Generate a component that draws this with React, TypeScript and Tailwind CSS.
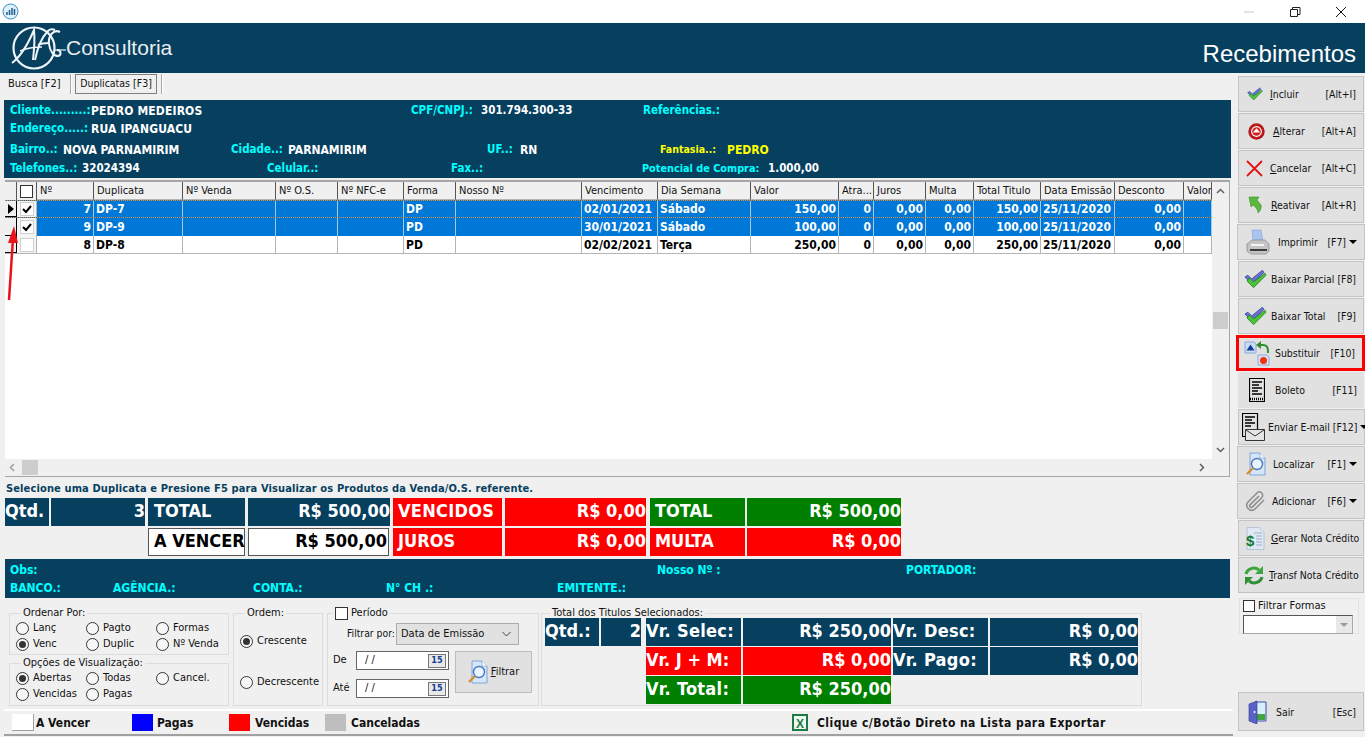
import React from "react";

// Grid column template shared by header and rows
const GRID_COLS =
  "grid grid-cols-[12px_20px_57px_89px_93px_62px_66px_52px_126px_76px_93px_88px_35px_52px_48px_67px_74px_69px_28px]";

const HEADERS = [
  "Nº", "Duplicata", "Nº Venda", "Nº O.S.", "Nº NFC-e", "Forma", "Nosso Nº", "Vencimento", "Dia Semana",
  "Valor", "Atra...", "Juros", "Multa", "Total Titulo", "Data Emissão", "Desconto", "Valor",
];

const ROWS = [
  { checked: true, current: true, n: "7", dup: "DP-7", forma: "DP", venc: "02/01/2021", dia: "Sábado", valor: "150,00", total: "150,00" },
  { checked: true, current: false, n: "9", dup: "DP-9", forma: "PD", venc: "30/01/2021", dia: "Sábado", valor: "100,00", total: "100,00" },
  { checked: false, current: false, n: "8", dup: "DP-8", forma: "PD", venc: "02/02/2021", dia: "Terça", valor: "250,00", total: "250,00" },
];

const CY = "whitespace-nowrap text-[11.5px] text-[#00ffff]";
const VAL = "whitespace-nowrap tracking-[.15px]";

const Logo = () => (
  <svg width="55" height="50" viewBox="0 0 55 50" className="shrink-0" fill="none" stroke="#eef3f6">
    <circle cx="23" cy="25" r="20.500" strokeWidth="2.200" />
    <path d="M1 40C9 34 17 21 23 7c1 9 0 21-1 30" strokeWidth="2" />
    <path d="M9 28c7-3 15-4 22-4" strokeWidth="1.600" />
    <path d="M24 37c2-10 5-21 13-29 2-2 5-2 7-1M27 22c4-2 8-2 11-2" strokeWidth="2" />
    <path d="M49 9c-6-3-12 3-11 12 1 8 5 12 9 12 4-1 3-6-1-6" strokeWidth="2" />
    <path d="M44 27h11" strokeWidth="1.200" />
  </svg>
);

const CheckIcon = ({ big }: { big?: boolean }) => (
  <svg width={big ? 23 : 16} height={big ? 20 : 14} viewBox="0 0 24 20">
    <path d="M1 8l3-2 4 4L19 1l2 2L8 15z" fill="#6a72d6" stroke="#2a3590" strokeWidth=".8" />
    <path d="M3 12l3-3 4 4L22 4l1 2-13 13z" fill="#4cc23a" stroke="#1f7f1f" strokeWidth=".8" />
  </svg>
);

const AlterIcon = () => (
  <svg width="17" height="17" viewBox="0 0 17 17">
    <circle cx="8.500" cy="8.500" r="8.200" fill="#b8181a" />
    <circle cx="8.500" cy="8.500" r="5.400" fill="#fff" />
    <circle cx="8.500" cy="8.500" r="4.300" fill="#d3201f" />
    <path d="M8.500 5.200l3.600 4.300H4.900z" fill="#fff" />
  </svg>
);

const CancelIcon = () => (
  <svg width="17" height="17" viewBox="0 0 17 17" fill="none" stroke="#e01515" strokeWidth="1.800">
    <path d="M1 1l15 15M16 1L1 16" />
  </svg>
);

const ReativarIcon = () => (
  <svg width="14" height="18" viewBox="0 0 14 18">
    <path d="M1 1h10l-2 3 4 5c1 3-1 6-3 8 0-3-2-6-5-8L3 11z" fill="#5cb83c" stroke="#3c8f2a" strokeWidth=".6" />
  </svg>
);

const PrinterIcon = () => (
  <svg width="24" height="26" viewBox="0 0 24 26">
    <path d="M6 1h9l2 11H7z" fill="#a9c4ee" stroke="#7f9bd0" strokeWidth=".5" />
    <path d="M1 15l5-4h13l4 4v7l-3 3H5l-4-3z" fill="#c4c4c4" stroke="#858585" strokeWidth=".7" />
    <path d="M4 20h17v2H4z" fill="#3c3c3c" />
    <path d="M5 15h13v2H5z" fill="#f4f4f4" />
  </svg>
);

const SubstituirIcon = () => (
  <svg width="26" height="25" viewBox="0 0 26 25">
    <path d="M1 1h9l2 2v9H1z" fill="#c9dcf7" stroke="#7f9dd0" strokeWidth=".8" />
    <path d="M6.500 3.500l4 6h-8z" fill="#123a97" />
    <path d="M14 14h9l2 2v8H14z" fill="#d6e4f8" stroke="#7f9dd0" strokeWidth=".8" />
    <circle cx="19.500" cy="19.500" r="3.500" fill="#f0330f" />
    <path d="M16 4h3c3 0 5 2 5 6v2" fill="none" stroke="#2f8f2f" strokeWidth="2" />
    <path d="M17 0v8l-5-4z" fill="#2f8f2f" />
  </svg>
);

const BoletoIcon = () => (
  <svg width="16" height="24" viewBox="0 0 16 24" fill="none" stroke="#000">
    <path d="M.5.500h15v23H.5z" strokeWidth="1.200" />
    <path d="M3 4h10M3 7h7M3 10h10M3 13h6M3 16h10" strokeWidth="1.600" />
    <path d="M1 21h14" strokeWidth="2.400" strokeDasharray="1 1" />
  </svg>
);

const EmailIcon = () => (
  <svg width="23" height="28" viewBox="0 0 23 28" fill="none" stroke="#000">
    <path d="M.5.500h15v23H.5z" strokeWidth="1.200" />
    <path d="M3 4h10M3 7h7M3 10h10M3 13h6" strokeWidth="1.500" />
    <path d="M3.500 16.500h19v11h-19z" fill="#e4e4e4" stroke="#333" />
    <path d="M4 17l9 6 9-6" stroke="#333" />
  </svg>
);

const FindIcon = () => (
  <svg width="20" height="24" viewBox="0 0 20 24">
    <path d="M4 1h10l5 5v17H4z" fill="#d5e5fa" stroke="#6d94d2" strokeWidth=".8" />
    <path d="M14 1v5h5" fill="#fff" stroke="#6d94d2" strokeWidth=".6" />
    <circle cx="11" cy="12" r="5.500" fill="#eaf6ff" stroke="#4a79b8" strokeWidth="1.400" />
    <path d="M7 16l-6 6" stroke="#d98d2b" strokeWidth="2.400" />
  </svg>
);

const ClipIcon = () => (
  <svg width="24" height="24" viewBox="0 0 24 24" fill="none" stroke="#8d8d8d" strokeWidth="1.500">
    <path d="M21 11l-9.200 9.200a5 5 0 0 1-7-7L14 4a3.300 3.300 0 0 1 4.700 4.700l-9.200 9.200a1.600 1.600 0 0 1-2.300-2.300L16 7" />
  </svg>
);

const NotaIcon = () => (
  <svg width="20" height="23" viewBox="0 0 20 23">
    <path d="M2 .500h12l5 5v17H2z" fill="#dfe8f3" stroke="#a5b6cc" strokeWidth=".7" />
    <path d="M9 6h8M11 9h6M11 12h6M11 15h6M11 18h6" stroke="#9fb0c4" />
    <text x="1" y="19" fontSize="15" fontWeight="700" fontFamily="Liberation Sans" fill="#0f7a35">$</text>
  </svg>
);

const TransfIcon = () => (
  <svg width="20" height="21" viewBox="0 0 20 21" fill="none">
    <path d="M2 9c1-5 8-8 13-4" stroke="#3ea53c" strokeWidth="3" />
    <path d="M19 1v8h-8z" fill="#3ea53c" />
    <path d="M18 12c-1 5-8 8-13 4" stroke="#2f8f36" strokeWidth="3" />
    <path d="M1 20v-8h8z" fill="#2f8f36" />
  </svg>
);

const DoorIcon = () => (
  <svg width="19" height="24" viewBox="0 0 19 24">
    <path d="M7 2h11v19H7z" fill="#d4f0fa" stroke="#3a4aa8" />
    <path d="M8 14h9v6H8z" fill="#3fa53c" />
    <path d="M1 4l8-3v23l-8-3z" fill="#5a62c8" stroke="#2f3790" strokeWidth=".6" />
    <circle cx="6.500" cy="12" r="1" fill="#fff" />
  </svg>
);

const Caret = () => <span className="ml-[3px] h-0 w-0 shrink-0 border-x-[4px] border-t-[4px] border-x-transparent border-t-black" />;

type SideButtonProps = {
  icon: React.ReactNode;
  iconBox: string;
  label: React.ReactNode;
  hot?: string;
  caret?: boolean;
  className?: string;
};

const SideButton = ({ icon, iconBox, label, hot, caret, className = "" }: SideButtonProps) => (
  <button className={`flex h-[36px] w-[126px] shrink-0 items-center border border-[#c4c4c4] bg-[#e1e1e1] pr-[7px] text-[10.4px] text-[#111] ${className}`}>
    <span className={`flex shrink-0 items-center justify-center ${iconBox}`}>{icon}</span>
    <span className="mt-[2px] whitespace-nowrap">{label}</span>
    {hot && <span className="ml-auto mt-[2px] whitespace-nowrap">{hot}</span>}
    {caret && <Caret />}
  </button>
);

const Radio = ({ label, checked, className = "" }: { label: string; checked?: boolean; className?: string }) => (
  <label className={`flex h-[16px] items-center gap-[4px] whitespace-nowrap text-[11px] text-[#111] ${className}`}>
    <span className="flex h-[13px] w-[13px] shrink-0 items-center justify-center rounded-full border border-[#333] bg-[#f7f7f7]">
      {checked && <span className="h-[7px] w-[7px] rounded-full bg-[#333]" />}
    </span>
    {label}
  </label>
);

const Group = ({ title, className = "", children }: { title: React.ReactNode; className?: string; children: React.ReactNode }) => (
  <fieldset className={`border border-[#dcdcdc] ${className}`}>
    <legend className="-mt-px ml-[5px] px-[2px] text-[11px] leading-[14px] text-[#111]">{title}</legend>
    {children}
  </fieldset>
);

const BigCell = ({ children, className = "" }: { children: React.ReactNode; className?: string }) => (
  <div className={`flex h-[28px] shrink-0 items-center whitespace-nowrap pb-[3px] text-[18px] font-bold leading-none ${className}`}>{children}</div>
);

const DateInput = () => (
  <div className="flex h-[19px] w-[93px] items-center border border-[#666] bg-white pl-[8px] text-[11px]">
    <span>/ /</span>
    <span className="ml-auto mr-[2px] flex h-[14px] w-[18px] items-center justify-center border border-[#777] bg-[#e8e8e8] text-[9px] font-bold leading-none text-[#123a97]">15</span>
  </div>
);

export default function App() {
  return (
    <div className="flex h-[737px] w-[1365px] flex-col overflow-hidden bg-[#f0f0f0] font-['DejaVu_Sans'] font-stretch-condensed text-[11px] text-[#111]">
      {/* Title bar */}
      <div className="flex h-[23px] shrink-0 items-center bg-white pl-[2px]">
        <svg width="17" height="17" viewBox="0 0 17 17" fill="none">
          <circle cx="8.500" cy="8.500" r="7.500" fill="#dff1fb" stroke="#2f8fc0" />
          <path d="M5 12V9M7.500 12V7M10 12V5M12.500 12V6" stroke="#1c5f8f" strokeWidth="1.500" />
        </svg>
        <div className="ml-auto flex items-center">
          <svg width="12" height="10" viewBox="0 0 12 10" className="mr-[34px]"><path d="M1 5h10" stroke="#c8c8c8" /></svg>
          <svg width="12" height="10" viewBox="0 0 12 10" fill="none" stroke="#222" className="mr-[34px]">
            <path d="M1.500 2.500h7v7h-7zM3.500 2.500V.5h7.500v7H8.500" />
          </svg>
          <svg width="12" height="12" viewBox="0 0 12 12" fill="none" stroke="#111" className="mr-[18px]">
            <path d="M1 1l10 10M11 1L1 11" />
          </svg>
        </div>
      </div>

      {/* Header */}
      <header className="flex h-[50px] shrink-0 items-center bg-[#07405f] pl-[11px] pr-[9px] text-white">
        <Logo />
        <span className="font-['Liberation_Sans'] text-[21px] text-[#e8eef2] font-stretch-normal">Consultoria</span>
        <span className="ml-auto mt-[12px] font-['Liberation_Sans'] text-[24px] font-stretch-normal">Recebimentos</span>
      </header>

      <div className="flex min-h-0 flex-1">
        {/* Left column */}
        <main className="flex w-[1238px] shrink-0 flex-col">
          {/* Tabs */}
          <div className="flex h-[22px] shrink-0 items-center">
            <span className="ml-[8px] w-[62px]">Busca [F2]</span>
            <span className="h-[20px] w-[2px] border-x border-l-[#a8a8a8] border-r-white" />
            <span className="ml-[3px] flex h-[20px] w-[82px] items-center justify-center border border-[#808080] text-[10.5px]">Duplicatas [F3]</span>
            <span className="ml-[4px] h-[20px] w-[2px] border-x border-l-[#a8a8a8] border-r-white" />
          </div>

          {/* Client panel */}
          <section className="ml-[4px] mt-[5px] flex h-[78px] w-[1227px] shrink-0 flex-col bg-[#07405f] pl-[6px] font-bold text-[12px] text-white">
            <div className="mt-[2px] flex h-[18px] items-center">
              <span className={`w-[81px] ${CY}`}>Cliente.........:</span>
              <span className={`w-[320px] ${VAL}`}>PEDRO MEDEIROS</span>
              <span className={`w-[70px] ${CY}`}>CPF/CNPJ.:</span>
              <span className="w-[162px] whitespace-nowrap text-[11.5px]">301.794.300-33</span>
              <span className={CY}>Referências.:</span>
            </div>
            <div className="flex h-[18px] items-center">
              <span className={`w-[81px] ${CY}`}>Endereço.....:</span>
              <span className={VAL}>RUA IPANGUACU</span>
            </div>
            <div className="mt-[2px] flex h-[20px] items-center">
              <span className={`w-[53px] ${CY}`}>Bairro..:</span>
              <span className="w-[168px] whitespace-nowrap">NOVA PARNAMIRIM</span>
              <span className={`w-[57px] ${CY}`}>Cidade..:</span>
              <span className="w-[199px] whitespace-nowrap">PARNAMIRIM</span>
              <span className={`w-[33px] ${CY}`}>UF..:</span>
              <span className="w-[140px]">RN</span>
              <span className="w-[67px] whitespace-nowrap text-[10.5px] text-[#ffff00]">Fantasia..:</span>
              <span className="text-[#ffff00]">PEDRO</span>
            </div>
            <div className="flex h-[18px] items-center">
              <span className={`w-[72px] ${CY}`}>Telefones..:</span>
              <span className="w-[185px] text-[11.5px]">32024394</span>
              <span className={`w-[184px] ${CY}`}>Celular..:</span>
              <span className={`w-[191px] ${CY}`}>Fax..:</span>
              <span className="w-[126px] whitespace-nowrap text-[10.8px] text-[#00ffff]">Potencial de Compra:</span>
              <span className="text-[11.5px]">1.000,00</span>
            </div>
          </section>

          {/* Grid */}
          <section className="relative ml-[5px] mt-[2px] flex h-[297px] w-[1225px] shrink-0 flex-col border-t-2 border-r border-b border-[#a6a6a6] bg-[#f0f0f0]">
            <div className="flex min-h-0 flex-1">
              <div className="flex w-[1207px] flex-col overflow-hidden bg-white">
                <div className={`${GRID_COLS} h-[18px] shrink-0 bg-[#f0f0f0]`}>
                  <span className="border-r border-[#555]" />
                  <span className="flex items-center justify-center border-r border-[#555]">
                    <span className="h-[13px] w-[13px] border border-[#333] bg-white" />
                  </span>
                  {HEADERS.map((h, i) => (
                    <span key={i} className="overflow-hidden whitespace-nowrap border-b border-r border-b-[#b5b5b5] border-r-[#555] pl-[3px] leading-[17px]">{h}</span>
                  ))}
                </div>
                {ROWS.map((r) => {
                  const sel = r.checked;
                  const cell = `flex items-center overflow-hidden whitespace-nowrap border-r px-[2px] ${sel ? "border-[#a8c8e8]" : "border-[#b5b5b5]"}`;
                  const right = `${cell} justify-end`;
                  return (
                    <div
                      key={r.n}
                      className={`${GRID_COLS} h-[18px] shrink-0 text-[12px] font-bold ${sel ? "bg-[#0078d7] text-white" : "border-b border-[#b5b5b5] bg-white text-black"} ${r.current ? "border-y border-dotted border-[#f08a24]" : ""}`}
                    >
                      <span className="flex items-center justify-center border-b border-r border-black bg-[#f0f0f0]">
                        {r.current && <span className="h-0 w-0 border-y-[5px] border-l-[6px] border-y-transparent border-l-black" />}
                      </span>
                      <span className="flex items-center justify-center border-r border-[#b5b5b5] bg-[#f4f4f4]">
                        <span className="flex h-[14px] w-[14px] items-center justify-center border border-[#d0d0d0] bg-white">
                          {r.checked && (
                            <svg width="10" height="9" viewBox="0 0 10 9" fill="none" stroke="#000" strokeWidth="2"><path d="M1 4l3 3 5-6" /></svg>
                          )}
                        </span>
                      </span>
                      <span className={right}>{r.n}</span>
                      <span className={cell}>{r.dup}</span>
                      <span className={cell} />
                      <span className={cell} />
                      <span className={cell} />
                      <span className={cell}>{r.forma}</span>
                      <span className={cell} />
                      <span className={cell}>{r.venc}</span>
                      <span className={cell}>{r.dia}</span>
                      <span className={right}>{r.valor}</span>
                      <span className={right}>0</span>
                      <span className={right}>0,00</span>
                      <span className={right}>0,00</span>
                      <span className={right}>{r.total}</span>
                      <span className={cell}>25/11/2020</span>
                      <span className={right}>0,00</span>
                      <span className={cell} />
                    </div>
                  );
                })}
              </div>
              {/* Vertical scrollbar */}
              <div className="flex w-[17px] flex-col items-center py-[6px]">
                <svg width="9" height="6" viewBox="0 0 9 6" fill="none" stroke="#606060" strokeWidth="1.500"><path d="M1 5l3.500-3.500L8 5" /></svg>
                <span className="mt-[118px] h-[17px] w-[15px] bg-[#cdcdcd]" />
                <svg width="9" height="6" viewBox="0 0 9 6" fill="none" stroke="#606060" strokeWidth="1.500" className="mt-auto"><path d="M1 1l3.500 3.500L8 1" /></svg>
              </div>
            </div>
            {/* Horizontal scrollbar */}
            <div className="flex h-[17px] shrink-0 items-center pl-[4px] pr-[24px]">
              <svg width="6" height="9" viewBox="0 0 6 9" fill="none" stroke="#a0a0a0" strokeWidth="1.500"><path d="M5 1L1.500 4.500 5 8" /></svg>
              <span className="ml-[7px] h-[15px] w-[16px] bg-[#cdcdcd]" />
              <svg width="6" height="9" viewBox="0 0 6 9" fill="none" stroke="#606060" strokeWidth="1.500" className="ml-auto"><path d="M1 1l3.500 3.500L1 8" /></svg>
            </div>
            {/* Red annotation arrow */}
            <svg width="12" height="76" viewBox="0 0 12 76" className="absolute left-[1px] top-[44px]">
              <path d="M3 74L7 12" stroke="#e8141c" strokeWidth="2.500" />
              <path d="M8 0l4 17H2z" fill="#e8141c" />
            </svg>
          </section>

          <p className="ml-[6px] mt-[5px] h-[14px] shrink-0 whitespace-nowrap text-[11px] font-bold leading-[14px] tracking-[.13px] text-[#07405f]">
            Selecione uma Duplicata e Presione F5 para Visualizar os Produtos da Venda/O.S. referente.
          </p>

          {/* Totals */}
          <div className="ml-[5px] mt-[2px] flex h-[58px] shrink-0 flex-col gap-[2px] text-white">
            <div className="flex">
              <BigCell className="w-[44px] bg-[#07405f]">Qtd.</BigCell>
              <BigCell className="ml-[2px] w-[94px] justify-end bg-[#07405f]">3</BigCell>
              <BigCell className="ml-[3px] w-[97px] bg-[#07405f] pl-[6px]">TOTAL</BigCell>
              <BigCell className="ml-[3px] w-[142px] justify-end bg-[#07405f]">R$ 500,00</BigCell>
              <BigCell className="ml-[3px] w-[109px] bg-[#ff0000] pl-[5px] tracking-[.3px]">VENCIDOS</BigCell>
              <BigCell className="ml-[3px] w-[141px] justify-end bg-[#ff0000]">R$ 0,00</BigCell>
              <BigCell className="ml-[4px] w-[95px] bg-[#008000] pl-[5px]">TOTAL</BigCell>
              <BigCell className="ml-[2px] w-[154px] justify-end bg-[#008000]">R$ 500,00</BigCell>
            </div>
            <div className="flex">
              <BigCell className="ml-[143px] w-[97px] border border-[#555] bg-white pl-[5px] text-black">A VENCER</BigCell>
              <BigCell className="ml-[3px] w-[141px] justify-end border border-[#555] bg-white pr-[1px] text-black">R$ 500,00</BigCell>
              <BigCell className="ml-[4px] w-[109px] bg-[#ff0000] pl-[5px]">JUROS</BigCell>
              <BigCell className="ml-[3px] w-[141px] justify-end bg-[#ff0000]">R$ 0,00</BigCell>
              <BigCell className="ml-[4px] w-[95px] bg-[#ff0000] pl-[5px]">MULTA</BigCell>
              <BigCell className="ml-[2px] w-[154px] justify-end bg-[#ff0000]">R$ 0,00</BigCell>
            </div>
          </div>

          {/* Info panel */}
          <section className="ml-[5px] mt-[3px] flex h-[39px] w-[1225px] shrink-0 flex-col justify-center bg-[#07405f] pl-[5px] text-[12px] font-bold text-[#00ffff]">
            <div className="flex h-[18px] items-center">
              <span className="w-[647px]">Obs:</span>
              <span className="w-[249px]">Nosso Nº :</span>
              <span>PORTADOR:</span>
            </div>
            <div className="flex h-[18px] items-center">
              <span className="w-[103px]">BANCO.:</span>
              <span className="w-[140px]">AGÊNCIA.:</span>
              <span className="w-[133px]">CONTA.:</span>
              <span className="w-[171px]">N° CH .:</span>
              <span>EMITENTE.:</span>
            </div>
          </section>

          {/* Filters */}
          <div className="ml-[9px] mt-[8px] flex h-[100px] shrink-0">
            <div className="flex w-[220px] shrink-0 flex-col">
              <Group title="Ordenar Por:" className="h-[49px] pl-[6px]">
                <div className="grid grid-cols-[70px_70px_1fr]">
                  <Radio label="Lanç" />
                  <Radio label="Pagto" />
                  <Radio label="Formas" />
                  <Radio label="Venc" checked />
                  <Radio label="Duplic" />
                  <Radio label="Nº Venda" />
                </div>
              </Group>
              <Group title="Opções de Visualização:" className="mt-[1px] h-[50px] pl-[6px]">
                <div className="grid grid-cols-[70px_70px_1fr]">
                  <Radio label="Abertas" checked />
                  <Radio label="Todas" />
                  <Radio label="Cancel." />
                  <Radio label="Vencidas" />
                  <Radio label="Pagas" />
                </div>
              </Group>
            </div>

            <Group title="Ordem:" className="ml-[4px] flex h-[100px] w-[90px] shrink-0 flex-col pl-[6px]">
              <Radio label="Crescente" className="mt-[13px]" checked />
              <Radio label="Decrescente" className="mt-[25px]" />
            </Group>

            <Group
              title={
                <span className="flex items-center gap-[3px]">
                  <span className="h-[13px] w-[13px] border border-[#333] bg-white" />
                  Período
                </span>
              }
              className="ml-[4px] h-[100px] w-[212px] shrink-0"
            >
              <div className="ml-[19px] mt-[3px] flex h-[22px] items-center">
                <span className="w-[49px] whitespace-nowrap text-[10.3px]">Filtrar por:</span>
                <span className="flex h-[22px] w-[123px] items-center justify-between border border-[#adadad] bg-[#e1e1e1] pl-[4px] pr-[7px]">
                  Data de Emissão
                  <svg width="9" height="6" viewBox="0 0 9 6" fill="none" stroke="#444"><path d="M.5 1l4 4 4-4" /></svg>
                </span>
              </div>
              <div className="mt-[6px] flex">
                <div className="ml-[5px] flex w-[23px] flex-col text-[11px]">
                  <span className="flex h-[19px] items-center">De</span>
                  <span className="mt-[9px] flex h-[19px] items-center">Até</span>
                </div>
                <div className="flex flex-col gap-[9px]">
                  <DateInput />
                  <DateInput />
                </div>
                <button className="ml-[6px] flex h-[42px] w-[77px] items-center justify-center gap-[3px] border border-[#bdbdbd] bg-[#e1e1e1]">
                  <FindIcon />
                  <span><span className="underline">F</span>iltrar</span>
                </button>
              </div>
            </Group>

            <Group title="Total dos Titulos Selecionados:" className="ml-[2px] flex h-[100px] w-[601px] shrink-0 pl-[3px] text-white">
              <div className="-mt-[2px] flex">
                <div className="mr-[5px] flex gap-[2px]">
                  <BigCell className="w-[54px] bg-[#07405f]">Qtd.:</BigCell>
                  <BigCell className="w-[40px] justify-end bg-[#07405f]">2</BigCell>
                </div>
                <div className="grid h-[86px] grid-cols-[95px_148px_95px_148px] gap-x-[2px] gap-y-[1px]">
                  <BigCell className="bg-[#07405f] tracking-[.3px]">Vr. Selec:</BigCell>
                  <BigCell className="justify-end bg-[#07405f]">R$ 250,00</BigCell>
                  <BigCell className="bg-[#07405f] tracking-[.3px]">Vr. Desc:</BigCell>
                  <BigCell className="justify-end bg-[#07405f]">R$ 0,00</BigCell>
                  <BigCell className="bg-[#ff0000]">Vr. J + M:</BigCell>
                  <BigCell className="justify-end bg-[#ff0000]">R$ 0,00</BigCell>
                  <BigCell className="bg-[#07405f] tracking-[.3px]">Vr. Pago:</BigCell>
                  <BigCell className="justify-end bg-[#07405f]">R$ 0,00</BigCell>
                  <BigCell className="bg-[#008000] tracking-[.3px]">Vr. Total:</BigCell>
                  <BigCell className="justify-end bg-[#008000]">R$ 250,00</BigCell>
                </div>
              </div>
            </Group>
          </div>

          {/* Legend */}
          <footer className="ml-[4px] mt-[3px] flex h-[27px] w-[1229px] shrink-0 items-center border-t-2 border-b-2 border-t-white border-b-[#a0a0a0] text-[12px] font-bold">
            <span className="ml-[8px] h-[17px] w-[22px] border-b border-r border-[#a0a0a0] bg-white" />
            <span className="ml-[2px] w-[96px]">A Vencer</span>
            <span className="h-[17px] w-[21px] bg-[#0000ff]" />
            <span className="ml-[4px] w-[72px]">Pagas</span>
            <span className="h-[17px] w-[21px] bg-[#ff0000]" />
            <span className="ml-[5px] w-[70px]">Vencidas</span>
            <span className="h-[17px] w-[21px] bg-[#bebebe]" />
            <span className="ml-[5px] w-[441px]">Canceladas</span>
            <svg width="16" height="17" viewBox="0 0 16 17">
              <path d="M0 0h16v17H0z" fill="#1d7a45" />
              <path d="M2 2h12v13H2z" fill="#eef7ef" />
              <text x="8" y="13.500" textAnchor="middle" fontSize="12" fontWeight="700" fontFamily="Liberation Sans" fill="#1d7a45">X</text>
            </svg>
            <span className="ml-[9px] tracking-[.45px]">Clique c/Botão Direto na Lista para Exportar</span>
          </footer>
        </main>

        {/* Right column */}
        <aside className="flex min-w-0 flex-1 flex-col gap-[1px] pt-[3px]">
          <SideButton icon={<CheckIcon />} iconBox="w-[31px]" label={<><u>I</u>ncluir</>} hot="[Alt+I]" />
          <SideButton icon={<AlterIcon />} iconBox="w-[34px]" label={<><u>A</u>lterar</>} hot="[Alt+A]" />
          <SideButton icon={<CancelIcon />} iconBox="w-[31px]" label={<><u>C</u>ancelar</>} hot="[Alt+C]" />
          <SideButton icon={<ReativarIcon />} iconBox="w-[32px]" label={<><u>R</u>eativar</>} hot="[Alt+R]" />
          <SideButton icon={<PrinterIcon />} iconBox="w-[40px]" label="Imprimir" hot="[F7]" caret className="-ml-px w-[128px] pr-[6px]" />
          <SideButton icon={<CheckIcon big />} iconBox="w-[32px]" label="Baixar Parcial" hot="[F8]" />
          <SideButton icon={<CheckIcon big />} iconBox="w-[32px]" label="Baixar Total" hot="[F9]" />
          <SideButton icon={<SubstituirIcon />} iconBox="w-[36px]" label="Substituir" hot="[F10]" className="-ml-[2px] w-[129px] border-[3px] border-[#f00] pr-[5px]" />
          <SideButton icon={<BoletoIcon />} iconBox="w-[37px]" label="Boleto" hot="[F11]" className="border-0" />
          <SideButton icon={<EmailIcon />} iconBox="w-[29px]" label="Enviar E-mail [F12]" caret className="w-[127px] pr-[2px]" />
          <SideButton icon={<FindIcon />} iconBox="w-[35px]" label="Localizar" hot="[F1]" caret className="-ml-px w-[128px] pr-[6px]" />
          <SideButton icon={<ClipIcon />} iconBox="w-[34px]" label="Adicionar" hot="[F6]" caret className="-ml-px w-[128px] pr-[6px]" />
          <SideButton icon={<NotaIcon />} iconBox="w-[32px]" label={<><u>G</u>erar Nota Crédito</>} className="pr-0" />
          <SideButton icon={<TransfIcon />} iconBox="w-[30px]" label={<><u>T</u>ransf Nota Crédito</>} className="pr-0" />

          <div className="ml-px mt-[4px] flex h-[36px] w-[120px] flex-col border border-[#e2e2e2] pl-[3px]">
            <span className="flex items-center gap-[3px] leading-[14px]">
              <span className="h-[12px] w-[12px] border border-[#333] bg-white" />
              Filtrar Formas
            </span>
            <span className="mt-[2px] flex h-[19px] w-[110px] items-center justify-end border border-[#555] border-b-[#aaa] border-r-[#aaa] bg-white">
              <span className="flex h-[17px] w-[16px] items-center justify-center bg-[#e8e8e8]">
                <span className="h-0 w-0 border-x-[4px] border-t-[4px] border-x-transparent border-t-[#9a9a9a]" />
              </span>
            </span>
          </div>

          <SideButton icon={<DoorIcon />} iconBox="w-[37px]" label="Sair" hot="[Esc]" className="mb-[6px] mt-auto h-[39px]" />
        </aside>
      </div>
    </div>
  );
}
